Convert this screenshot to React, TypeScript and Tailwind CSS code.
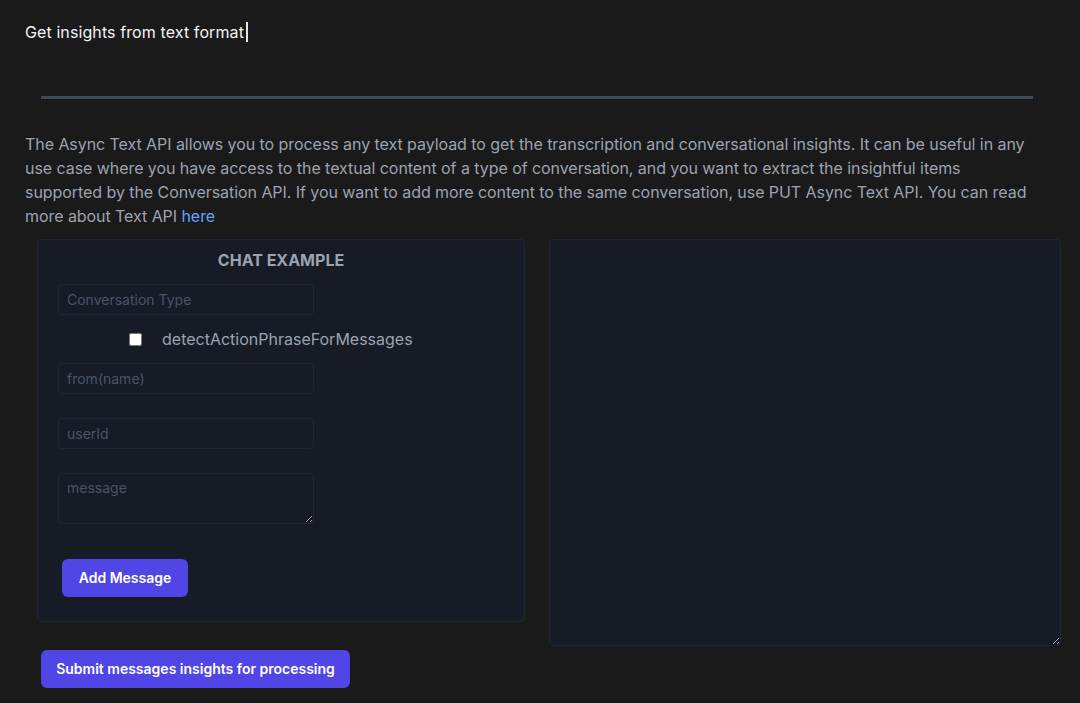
import { useState } from "react";

const INTRO_LINES = [
  "The Async Text API allows you to process any text payload to get the transcription and conversational insights. It can be useful in any",
  "use case where you have access to the textual content of a type of conversation, and you want to extract the insightful items",
  "supported by the Conversation API. If you want to add more content to the same conversation, use PUT Async Text API. You can read",
];

export default function App() {
  const [detect, setDetect] = useState(false);

  return (
    <div
      className="min-h-screen bg-[#1a1a1a] px-[25px] pt-[20px]"
      style={{ fontFamily: "Inter, 'Noto Sans', sans-serif" }}
    >
      <div className="text-base leading-6 text-[#f3f4f6]">
        <span className="border-r-2 border-[#e5e7eb] pr-[2px] tracking-[0.1px]">Get insights from text format</span>
      </div>

      <div className="mt-[52px] ml-[16px] h-[3px] w-[992px] bg-[#3f4853]" />

      <p className="mt-[33px] text-base leading-6 tracking-[-0.06px] text-[#9ca3af]">
        {INTRO_LINES.map((line) => (
          <span key={line} className="block whitespace-nowrap">
            {line}
          </span>
        ))}
        <span className="block whitespace-nowrap">
          more about Text API{" "}
          <a href="#" className="text-[#60a5fa]">
            here
          </a>
        </span>
      </p>

      <div className="mt-[11px] ml-[12px] flex items-start gap-6">
        <div className="flex h-[383px] w-[488px] shrink-0 flex-col rounded border border-[#1f2633] bg-[#161b26] px-[20px] pt-[8px]">
          <h2 className="text-center text-base font-bold leading-6 text-[#9ca3af]">CHAT EXAMPLE</h2>
          <input
            placeholder="Conversation Type"
            className="mt-[12px] h-[31px] w-64 rounded border border-[#1f2633] bg-transparent px-2 text-sm text-gray-300 placeholder:text-[#4b5563] outline-none"
          />
          <label className="flex h-[48px] items-center pl-[71px] text-base text-[#9ca3af]">
            <input
              type="checkbox"
              checked={detect}
              onChange={(e) => setDetect(e.target.checked)}
              className="m-0 h-[13px] w-[13px]"
            />
            <span className="ml-[20px]">detectActionPhraseForMessages</span>
          </label>
          <input
            placeholder="from(name)"
            className="h-[31px] w-64 rounded border border-[#1f2633] bg-transparent px-2 text-sm text-gray-300 placeholder:text-[#4b5563] outline-none"
          />
          <input
            placeholder="userId"
            className="mt-6 h-[31px] w-64 rounded border border-[#1f2633] bg-transparent px-2 text-sm text-gray-300 placeholder:text-[#4b5563] outline-none"
          />
          <textarea
            placeholder="message"
            className="mt-6 h-[51px] w-64 rounded border border-[#1f2633] bg-transparent px-2 py-[4px] text-sm text-gray-300 placeholder:text-[#4b5563] outline-none"
          />
          <button className="mt-[35px] ml-[4px] h-[38px] w-[126px] rounded-md bg-[#4f46e5] text-sm font-semibold text-white">
            Add Message
          </button>
        </div>

        <textarea className="h-[407px] w-[512px] shrink-0 rounded border border-[#1f2633] bg-[#161b26] p-2 text-sm text-gray-300 outline-none" />
      </div>

      <button className="mt-[4px] ml-[16px] h-[38px] w-[309px] rounded-md bg-[#4f46e5] text-sm font-semibold text-white">
        Submit messages insights for processing
      </button>
    </div>
  );
}
